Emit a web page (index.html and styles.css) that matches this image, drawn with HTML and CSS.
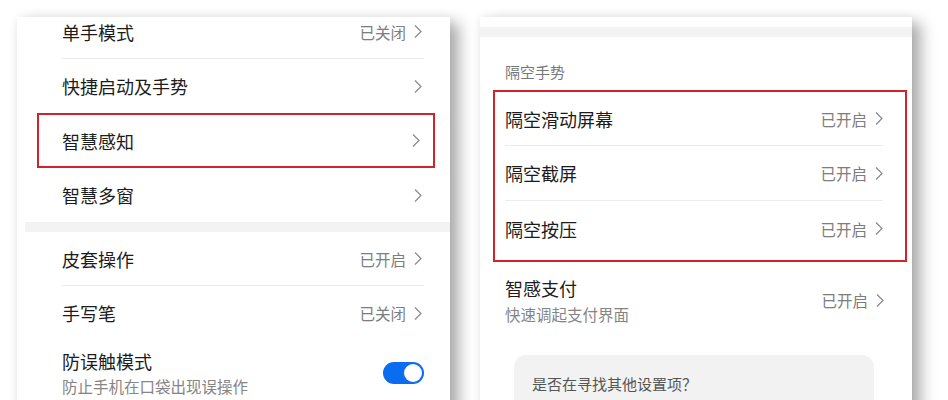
FILE: index.html
```html
<!DOCTYPE html>
<html lang="zh-CN">
<head>
    <meta charset="UTF-8">
    <meta name="viewport" content="width=device-width, initial-scale=1.0">
    <title>智慧感知设置</title>
    <link rel="stylesheet" href="styles.css">
</head>
<body>
    <div class="screens">
        <!-- left screen: 辅助功能 -->
        <div class="phone phone-left">
            <div class="list list-top">
                <div class="row divided">
                    <span class="title">单手模式</span>
                    <span class="value">已关闭<svg class="chev" viewBox="0 0 8 14"><polyline points="1,1 7,7 1,13"/></svg></span>
                </div>
                <div class="row">
                    <span class="title">快捷启动及手势</span>
                    <span class="value"><svg class="chev" viewBox="0 0 8 14"><polyline points="1,1 7,7 1,13"/></svg></span>
                </div>
                <div class="mark mark-left">
                    <div class="row">
                        <span class="title">智慧感知</span>
                        <span class="value"><svg class="chev" viewBox="0 0 8 14"><polyline points="1,1 7,7 1,13"/></svg></span>
                    </div>
                </div>
                <div class="row">
                    <span class="title">智慧多窗</span>
                    <span class="value"><svg class="chev" viewBox="0 0 8 14"><polyline points="1,1 7,7 1,13"/></svg></span>
                </div>
            </div>
            <div class="band band-left"></div>
            <div class="list">
                <div class="row divided">
                    <span class="title">皮套操作</span>
                    <span class="value">已开启<svg class="chev" viewBox="0 0 8 14"><polyline points="1,1 7,7 1,13"/></svg></span>
                </div>
                <div class="row">
                    <span class="title">手写笔</span>
                    <span class="value">已关闭<svg class="chev" viewBox="0 0 8 14"><polyline points="1,1 7,7 1,13"/></svg></span>
                </div>
                <div class="row row-tall">
                    <div class="text">
                        <span class="title">防误触模式</span>
                        <span class="sub">防止手机在口袋出现误操作</span>
                    </div>
                    <span class="switch"><span class="knob"></span></span>
                </div>
            </div>
        </div>

        <!-- right screen: 智慧感知 -->
        <div class="phone phone-right">
            <div class="band band-right"></div>
            <div class="section-head">隔空手势</div>
            <div class="mark mark-right">
                <div class="row divided">
                    <span class="title">隔空滑动屏幕</span>
                    <span class="value">已开启<svg class="chev" viewBox="0 0 8 14"><polyline points="1,1 7,7 1,13"/></svg></span>
                </div>
                <div class="row divided">
                    <span class="title">隔空截屏</span>
                    <span class="value">已开启<svg class="chev" viewBox="0 0 8 14"><polyline points="1,1 7,7 1,13"/></svg></span>
                </div>
                <div class="row">
                    <span class="title">隔空按压</span>
                    <span class="value">已开启<svg class="chev" viewBox="0 0 8 14"><polyline points="1,1 7,7 1,13"/></svg></span>
                </div>
            </div>
            <div class="row row-pay">
                <div class="text">
                    <span class="title">智感支付</span>
                    <span class="sub">快速调起支付界面</span>
                </div>
                <span class="value">已开启<svg class="chev" viewBox="0 0 8 14"><polyline points="1,1 7,7 1,13"/></svg></span>
            </div>
            <div class="hint">是否在寻找其他设置项？</div>
        </div>
    </div>
</body>
</html>
```

FILE: styles.css
```css
* {
    margin: 0;
    padding: 0;
    box-sizing: border-box;
}

body {
    font-family: "Noto Sans CJK SC", "Noto Sans", sans-serif;
    background-color: #fff;
    width: 948px;
    height: 400px;
    overflow: hidden;
}

.screens {
    display: flex;
    gap: 30px;
    padding: 17px 0 0 17px;
}

.phone {
    background-color: #fff;
    height: 400px;
    overflow: hidden;
    box-shadow: 9px 6px 14px rgba(0, 0, 0, 0.32), 0 0 10px rgba(0, 0, 0, 0.06);
}

.phone-left {
    width: 433px;
}

.phone-right {
    width: 432px;
}

.list-top {
    margin-top: -12px;
}

.row {
    display: flex;
    align-items: center;
    justify-content: space-between;
    height: 54px;
    margin: 0 26px 0 45px;
}

.divided {
    border-bottom: 1px solid #ececec;
}

.title {
    font-size: 18px;
    color: #1c1c1c;
}

.value {
    display: flex;
    align-items: center;
    gap: 8px;
    font-size: 15.5px;
    color: #7d7d7d;
}

.phone-left .value {
    margin-right: 2px;
}

.chev {
    width: 8px;
    height: 15px;
    fill: none;
    stroke: #888;
    stroke-width: 1.2;
}

.mark {
    border: 2px solid #d2232a;
}

.mark-left {
    margin: 0 15px 0 20px;
    height: 55px;
    display: flex;
    align-items: center;
}

.mark-left .row {
    flex: 1;
    margin: 0 11px 0 23px;
}

.band {
    height: 10px;
    background-color: #f3f3f3;
}

.band-left {
    margin-left: 8px;
}

.band-right {
    margin-top: 10px;
}

.row-tall {
    height: 74px;
    align-items: flex-start;
    padding-top: 8px;
}

.text {
    display: flex;
    flex-direction: column;
}

.sub {
    font-size: 15.5px;
    color: #858585;
    margin-top: 1px;
}

.row-pay .sub {
    margin-top: 2px;
}

.switch {
    position: relative;
    width: 41px;
    height: 22px;
    margin-top: 14px;
    border-radius: 11px;
    background-color: #0a6cf0;
}

.knob {
    position: absolute;
    top: 2px;
    right: 2px;
    width: 18px;
    height: 18px;
    border-radius: 50%;
    background-color: #fff;
}

.section-head {
    font-size: 15px;
    color: #777;
    margin: 24px 0 0 25px;
    height: 29px;
}

.mark-right {
    margin: 0 5px 0 13px;
    padding-bottom: 4px;
}

.mark-right .row {
    height: 55px;
    margin: 0 22px 0 10px;
}

.mark-right .row:first-child {
    height: 54px;
}

.row-pay {
    height: 80px;
    margin: 0 28px 0 25px;
    padding-bottom: 4px;
}

.hint {
    margin: 13px 38px 0 34px;
    height: 80px;
    padding: 18px 0 0 18px;
    border-radius: 12px;
    background-color: #f2f2f2;
    font-size: 15px;
    color: #555;
}
```
